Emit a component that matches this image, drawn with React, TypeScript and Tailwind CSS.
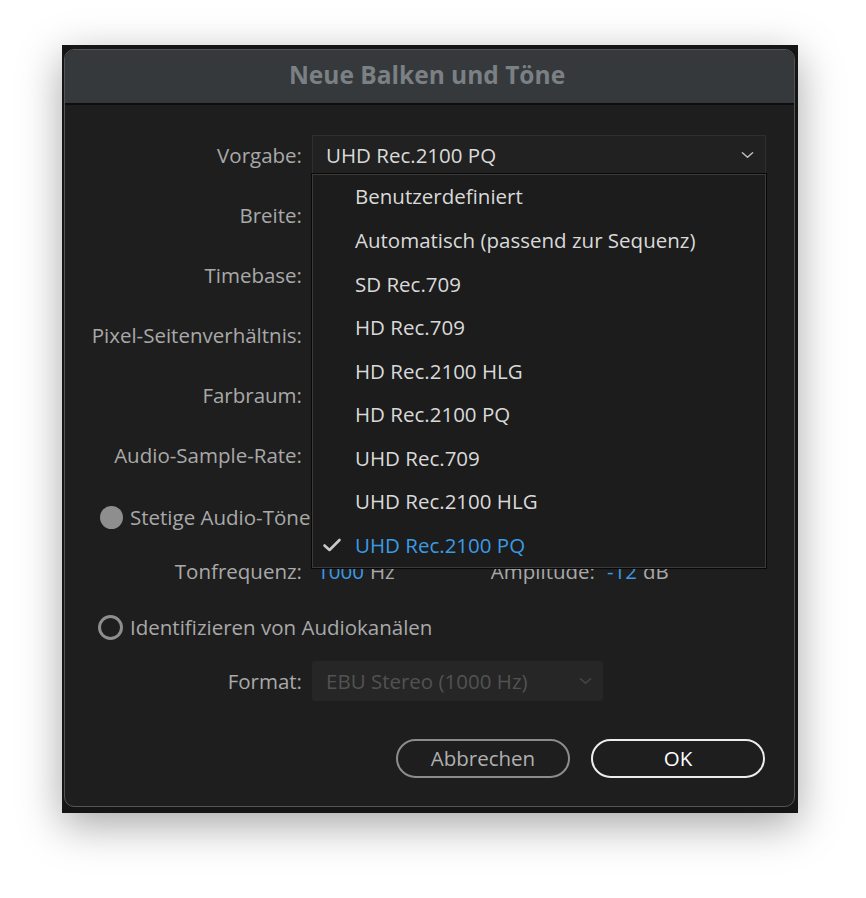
import React from "react";

const font = { fontFamily: "'Open Sans', 'Noto Sans', sans-serif" };

function Chevron({ className }: { className?: string }) {
  return (
    <svg viewBox="0 0 14 8" className={className} fill="none" stroke="currentColor" strokeWidth="1.6" strokeLinecap="round" strokeLinejoin="round">
      <path d="M1.5 1.5 L7 6.5 L12.5 1.5" />
    </svg>
  );
}

const items = [
  "Benutzerdefiniert",
  "Automatisch (passend zur Sequenz)",
  "SD Rec.709",
  "HD Rec.709",
  "HD Rec.2100 HLG",
  "HD Rec.2100 PQ",
  "UHD Rec.709",
  "UHD Rec.2100 HLG",
  "UHD Rec.2100 PQ",
];

function Label({ children }: { children: React.ReactNode }) {
  return <div className="text-right text-[20.5px] text-[#a9a9a9] leading-none">{children}</div>;
}

export default function App() {
  return (
    <div className="w-[866px] h-[898px] bg-white pt-[45px] pl-[62px]" style={font}>
      <div className="w-[736px] h-[768px] bg-[#151515] pt-[4px] pl-[2px] shadow-[0_12px_40px_rgba(0,0,0,0.35)]">
        <div className="w-[731px] h-[758px] rounded-[10px] border border-[#555] bg-[#1e1e1e] overflow-hidden flex flex-col">
          <div className="h-[55px] bg-[#35393c] border-b-2 border-[#0d0d0d] flex items-center justify-center">
            <span className="text-[24.5px] font-bold text-[#7b8084] mr-[5px] mb-[3px]">Neue Balken und Töne</span>
          </div>
          <div className="pt-[20px] flex flex-col">
            {/* Vorgabe */}
            <div className="grid grid-cols-[237px_1fr] gap-x-[10px] items-center h-[60px]">
              <Label>Vorgabe:</Label>
              <div className="relative w-[454px]">
                <div className="h-[40px] bg-[#212121] border border-[#2f2f2f] flex items-center pl-[13px] pr-[11px] justify-between">
                  <span className="text-[20.5px] text-[#dadada]">UHD Rec.2100 PQ</span>
                  <Chevron className="w-[13px] h-[8px] text-[#bdbdbd]" />
                </div>
                <div className="absolute left-0 top-[39px] w-[454px] h-[394px] bg-[#1c1c1c] border border-[#3b3b3b] shadow-[0_0_0_1px_#080808] z-10 flex flex-col">
                  {items.map((it, i) => {
                    const sel = i === items.length - 1;
                    return (
                      <div key={it} className="h-[43.7px] flex items-center relative">
                        {sel && (
                          <svg viewBox="0 0 20 16" className="absolute left-[9px] w-[20px] h-[16px]" fill="none" stroke="#c9c9c9" strokeWidth="2.6" strokeLinecap="round" strokeLinejoin="round">
                            <path d="M2.5 8.5 L7.5 13 L17.5 3" />
                          </svg>
                        )}
                        <span className={"pl-[42px] text-[20.5px] " + (sel ? "text-[#3a9ae3]" : "text-[#d9d9d9]")}>{it}</span>
                      </div>
                    );
                  })}
                </div>
              </div>
            </div>
            {["Breite:", "Timebase:", "Pixel-Seitenverhältnis:", "Farbraum:", "Audio-Sample-Rate:"].map((l) => (
              <div key={l} className="grid grid-cols-[237px_1fr] gap-x-[10px] items-center h-[60px]">
                <Label>{l}</Label>
                <div />
              </div>
            ))}
            {/* Radio 1 */}
            <div className="h-[64px] flex items-center pl-[35px] gap-[7px]">
              <div className="w-[23px] h-[23px] rounded-full bg-[#8e8e8e]" />
              <span className="text-[20.5px] text-[#a9a9a9]">Stetige Audio-Töne</span>
            </div>
            {/* Tonfrequenz */}
            <div className="h-[44px] grid grid-cols-[237px_1fr] gap-x-[15px] items-center">
              <Label>Tonfrequenz:</Label>
              <div className="flex items-center text-[20.5px]">
                <div className="w-[278px] flex items-center">
                  <span className="text-[#3a9ae3]">1000</span>
                  <span className="text-[#a9a9a9] ml-[6px]">Hz</span>
                  <span className="text-[#a9a9a9] ml-auto">Amplitude:</span>
                </div>
                <span className="text-[#3a9ae3] ml-[12px]">-12</span>
                <span className="text-[#a9a9a9] ml-[6px]">dB</span>
              </div>
            </div>
            {/* Radio 2 */}
            <div className="h-[68px] flex items-center pl-[33px] gap-[7px]">
              <div className="w-[25px] h-[25px] rounded-full border-[3px] border-[#8e8e8e]" />
              <span className="text-[20.5px] text-[#a9a9a9]">Identifizieren von Audiokanälen</span>
            </div>
            {/* Format */}
            <div className="h-[40px] grid grid-cols-[237px_1fr] gap-x-[10px] items-center">
              <Label>Format:</Label>
              <div className="w-[291px] h-[40px] bg-[#262626] rounded-[3px] flex items-center justify-between pl-[14px] pr-[11px]">
                <span className="text-[20.5px] text-[#525252]">EBU Stereo (1000 Hz)</span>
                <Chevron className="w-[13px] h-[8px] text-[#474747]" />
              </div>
            </div>
            {/* Buttons */}
            <div className="mt-[38px] flex justify-end gap-[21px] pr-[29px]">
              <button className="w-[174px] h-[39px] rounded-full border-2 border-[#8c8c8c] text-[20.5px] text-[#b0b0b0]">Abbrechen</button>
              <button className="w-[174px] h-[39px] rounded-full border-2 border-[#ececec] text-[20.5px] text-white">OK</button>
            </div>
          </div>
        </div>
      </div>
    </div>
  );
}
